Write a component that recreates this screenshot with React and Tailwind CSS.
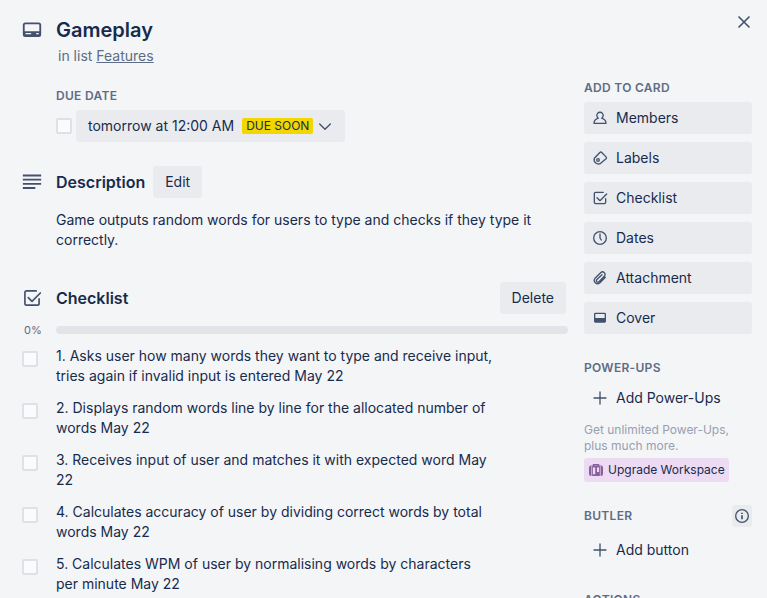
import React from "react";

const items = [
  "1. Asks user how many words they want to type and receive input, tries again if invalid input is entered May 22",
  "2. Displays random words line by line for the allocated number of words May 22",
  "3. Receives input of user and matches it with expected word May 22",
  "4. Calculates accuracy of user by dividing correct words by total words May 22",
  "5. Calculates WPM of user by normalising words by characters per minute May 22",
];

function Icon({ children, className = "size-4" }) {
  return (
    <svg
      viewBox="0 0 24 24"
      fill="none"
      stroke="currentColor"
      strokeWidth="2"
      strokeLinecap="round"
      strokeLinejoin="round"
      aria-hidden="true"
      className={`shrink-0 text-[#42526e] ${className}`}
    >
      {children}
    </svg>
  );
}

const card = (
  <path
    fill="currentColor"
    stroke="none"
    fillRule="evenodd"
    d="M4 3h16a3 3 0 0 1 3 3v11.500a3 3 0 0 1-3 3H4a3 3 0 0 1-3-3V6a3 3 0 0 1 3-3Zm.200 2a1 1 0 0 0-1 1v7.500h17.600V6a1 1 0 0 0-1-1H4.200Zm0 10.500v1.600h6.800v-1.600H4.200Zm12.800 0v1.600h3v-1.600h-3Z"
  />
);
const lines = (
  <path d="M1 4.200h22M1 9.200h22M1 14.200h22M1 19.200h15" strokeWidth="2.200" strokeLinecap="butt" />
);
const check = (
  <path d="M17 3.500H5.500a2 2 0 0 0-2 2v13a2 2 0 0 0 2 2h13a2 2 0 0 0 2-2V13M7.500 11.500l4.500 4.500L22 6" />
);
const member = (
  <path d="M9.500 12.300a4.800 4.800 0 1 1 5 0c4 1.200 6.500 4 6.500 7.700H3c0-3.700 2.500-6.500 6.500-7.700Z" />
);
const label = (
  <>
    <path d="M3.500 12.500 11.800 3.800a2 2 0 0 1 2.800 0l6.500 6.500a2 2 0 0 1 0 2.800L13 20a6.500 6.500 0 0 1-9.500-7.500Z" />
    <circle cx="9" cy="15" r="2" />
  </>
);
const clock = (
  <>
    <circle cx="12" cy="12" r="9.500" />
    <path d="M12 6v6l2 3" />
  </>
);
const clip = (
  <path d="m20 11-8.500 8.500a5 5 0 0 1-7-7l8.500-8.500a3.700 3.700 0 0 1 5.500 5.500l-8 8a2 2 0 0 1-3.200-3.200L15 7" />
);
const cover = (
  <path
    fill="currentColor"
    stroke="none"
    fillRule="evenodd"
    d="M5 4h14a2 2 0 0 1 2 2v11a2 2 0 0 1-2 2H5a2 2 0 0 1-2-2V6a2 2 0 0 1 2-2Zm0 2v6h14V6H5Z"
  />
);
const plus = <path d="M12 3v18M3 12h18" />;

const actions = [
  ["Members", member],
  ["Labels", label],
  ["Checklist", check],
  ["Dates", clock],
  ["Attachment", clip],
  ["Cover", cover],
];

function SideButton({ icon, children, plain }) {
  return (
    <button
      type="button"
      className={`flex h-8 w-full items-center gap-2 rounded-[3px] px-2 text-left ${plain ? "" : "bg-[#eaebef]"}`}
    >
      <Icon>{icon}</Icon>
      {children}
    </button>
  );
}

function SideHeading({ children }) {
  return (
    <h3 className="text-xs leading-5 font-semibold tracking-wide text-[#5e6c84] uppercase">
      {children}
    </h3>
  );
}

function Tick(props) {
  return (
    <input
      type="checkbox"
      className="size-4 shrink-0 appearance-none rounded-xs border-2 border-[#dfe1e6] bg-[#fafbfc]"
      {...props}
    />
  );
}

function Row({ icon, children }) {
  return (
    <div className="flex items-center">
      <div className="w-10 shrink-0 pl-[6px]">
        <Icon className="size-5">{icon}</Icon>
      </div>
      {children}
    </div>
  );
}

export default function App() {
  return (
    <div className="relative flex h-screen gap-4 overflow-hidden bg-[#f4f5f7] pr-[15px] pl-4 font-[Inter,sans-serif] text-sm leading-5 text-[#172b4d]">
      <button type="button" aria-label="Close" className="absolute top-3 right-[13px]">
        <Icon className="size-5">
          <path d="m6 6 12 12M18 6 6 18" />
        </Icon>
      </button>

      <main className="min-w-0 flex-1 pt-[18px]">
        <Row icon={card}>
          <h1 className="text-xl leading-6 font-semibold">Gameplay</h1>
        </Row>
        <p className="mt-1 pl-[42px] text-[#5e6c84]">
          in list <a href="#features" className="underline">Features</a>
        </p>

        <section className="mt-5 pl-10">
          <SideHeading>Due date</SideHeading>
          <div className="mt-1 flex items-center gap-1">
            <Tick aria-label="Mark due date complete" />
            <button type="button" className="flex h-8 items-center rounded-[3px] bg-[#eaebef] px-3">
              tomorrow at 12:00 AM
              <span className="ml-2 rounded-xs bg-[#f2d600] px-1 text-xs leading-4">DUE SOON</span>
              <Icon className="ml-1 size-4">
                <path d="m4 9 8 8 8-8" />
              </Icon>
            </button>
          </div>
        </section>

        <section className="mt-6">
          <Row icon={lines}>
            <h2 className="text-base leading-8 font-semibold">Description</h2>
            <button type="button" className="ml-2 h-8 rounded-[3px] bg-[#eaebef] px-3">Edit</button>
          </Row>
          <p className="mt-3 pr-8 pl-10">
            Game outputs random words for users to type and checks if they type it correctly.
          </p>
        </section>

        <section className="mt-8">
          <Row icon={check}>
            <h2 className="flex-1 text-base leading-8 font-semibold">Checklist</h2>
            <button type="button" className="mr-[2px] h-8 rounded-[3px] bg-[#eaebef] px-3">Delete</button>
          </Row>
          <div className="mt-2 flex items-center">
            <span className="w-10 shrink-0 pl-2 text-[11px] leading-4 text-[#5e6c84]">0%</span>
            <div
              role="progressbar"
              aria-label="Checklist progress"
              aria-valuenow={0}
              className="h-2 flex-1 rounded-full bg-[#e2e4e9]"
            />
          </div>
          <ul className="mt-2 flex flex-col gap-3">
            {items.map((text, i) => (
              <li key={text} className="flex items-start pl-[6px]">
                <span className="flex w-[34px] shrink-0 pt-[5px]">
                  <Tick id={`item-${i}`} />
                </span>
                <label htmlFor={`item-${i}`} className="flex-1 pr-[72px]">{text}</label>
              </li>
            ))}
          </ul>
        </section>
      </main>

      <aside className="w-[168px] shrink-0 pt-[78px]">
        <SideHeading>Add to card</SideHeading>
        <div className="mt-1 flex flex-col gap-2">
          {actions.map(([name, icon]) => (
            <SideButton key={name} icon={icon}>{name}</SideButton>
          ))}
        </div>

        <div className="mt-6">
          <SideHeading>Power-Ups</SideHeading>
          <div className="mt-1">
            <SideButton plain icon={plus}>Add Power-Ups</SideButton>
          </div>
          <p className="mt-2 text-xs leading-4 text-[#97a0af]">Get unlimited Power-Ups, plus much more.</p>
          <button type="button" className="mt-1 flex h-6 items-center gap-1 rounded-[3px] bg-[#eddbf4] px-1 text-xs whitespace-nowrap">
            <svg viewBox="0 0 16 16" className="size-4 shrink-0" aria-hidden="true">
              <path d="M5.500 4V2.700h5V4" fill="none" stroke="#89609e" strokeWidth="1.400" />
              <rect x="1" y="3.500" width="14" height="10.500" rx="2" fill="#89609e" />
              <path d="M3.700 4v10M12.300 4v10" stroke="#eddbf4" strokeWidth=".7" />
              <path d="M5 5.500h2.200v6.700H5zM9 5.500h2v4.500H9z" fill="#eddbf4" />
            </svg>
            Upgrade Workspace
          </button>
        </div>

        <div className="mt-6">
          <div className="flex h-5 items-center justify-between">
            <SideHeading>Butler</SideHeading>
            <button type="button" aria-label="About Butler" className="rounded-[3px] bg-[#eaebef] px-[2px] py-[3px]">
              <Icon>
                <circle cx="12" cy="12" r="9.500" />
                <path d="M12 7v2M12 11v6" strokeWidth="2.500" strokeLinecap="butt" />
              </Icon>
            </button>
          </div>
          <div className="mt-2">
            <SideButton plain icon={plus}>Add button</SideButton>
          </div>
        </div>

        <div className="mt-6">
          <SideHeading>Actions</SideHeading>
        </div>
      </aside>
    </div>
  );
}
